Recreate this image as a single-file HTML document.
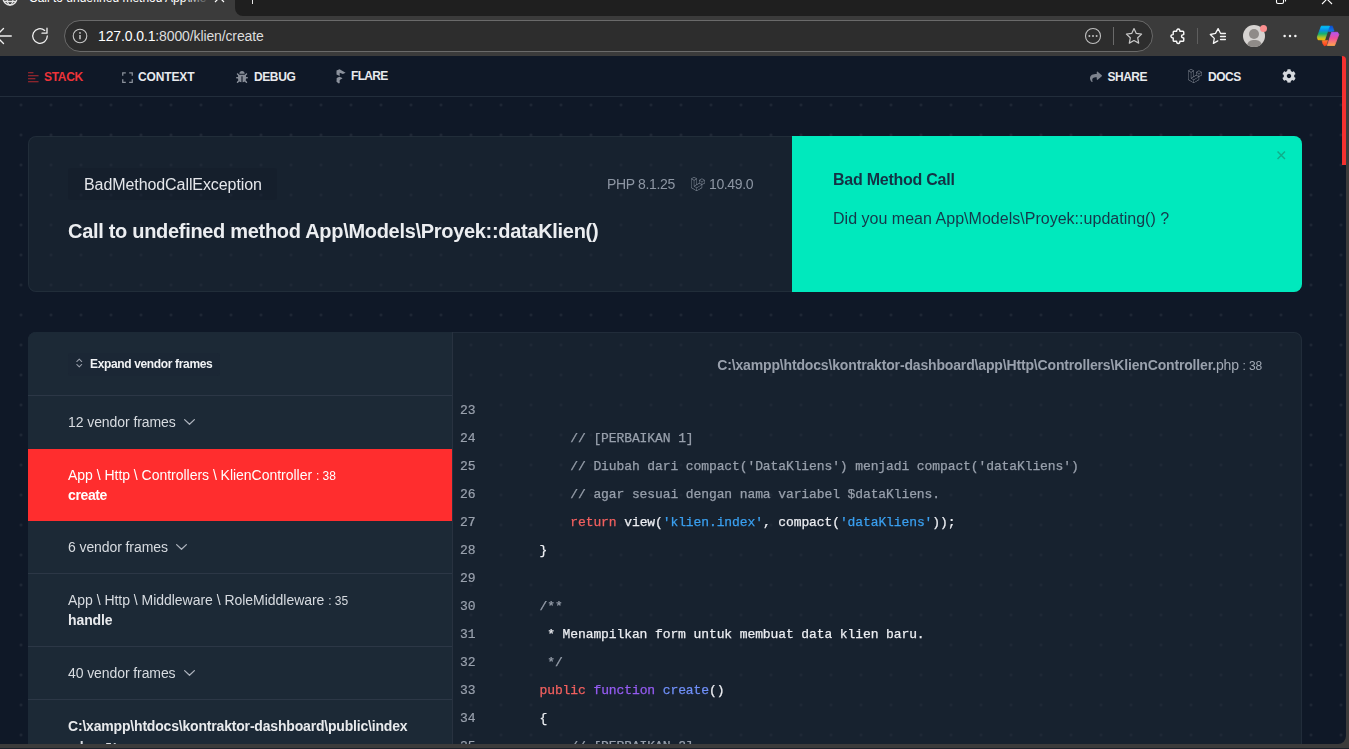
<!DOCTYPE html>
<html>
<head>
<meta charset="utf-8">
<title>Call to undefined method App\Models\Proyek::dataKlien()</title>
<style>
*{box-sizing:border-box;margin:0;padding:0}
html,body{width:1349px;height:749px;overflow:hidden;background:#3b3b3b;font-family:"Liberation Sans",sans-serif;}
.abs{position:absolute}
#tabstrip{position:absolute;left:0;top:0;width:1349px;height:16px;background:#3b3b3b;overflow:hidden}
#tabdark{position:absolute;left:235px;top:-10px;width:1120px;height:26px;background:#1f1f1f;border-bottom-left-radius:8px}
#toolbar{position:absolute;left:0;top:16px;width:1349px;height:40px;background:#3b3b3b}
#addr{position:absolute;left:64px;top:4px;width:1089px;height:32px;border-radius:16px;background:#2d2d2d;border:1px solid #6a6a6a}
#url{position:absolute;left:98px;top:11px;font-size:14px;line-height:18px;color:#fff;white-space:nowrap;letter-spacing:-0.12px}
#url span{color:#dedede}
#page{position:absolute;left:0;top:56px;width:1346px;height:688px;background-color:#0f1827;overflow:hidden;border-top-right-radius:8px;border-bottom-right-radius:8px;
 background-image:radial-gradient(circle at 1.5px 1.5px, rgba(255,255,255,0.085) 0, rgba(255,255,255,0.085) 0.9px, rgba(255,255,255,0) 1.6px);background-size:30px 30px;background-position:19.5px 17.5px}
#nav{position:absolute;left:0;top:0;width:1346px;height:41px;background:#0f1827;border-bottom:1px solid #222d3b}
.navitem{position:absolute;top:13.500px;font-size:12px;line-height:14px;font-weight:bold;color:#e8eaee;text-transform:uppercase;white-space:nowrap}
svg{position:absolute;overflow:visible}
.t{position:absolute;white-space:nowrap}

.sep{left:0;width:424px;height:1px;background:#2c3746}
.vf{font-size:14px;line-height:18px;color:#d7dbe0}
.fr{font-size:14px;line-height:18px;color:#d7dbe0}
.fm{font-size:14px;line-height:18px;font-weight:bold;color:#e8eaed}
.ln{font-size:12px}
.chev{fill:none;stroke:#aab0ba;stroke-width:1.300;stroke-linecap:round;stroke-linejoin:round}

.lnum{font-family:"Liberation Mono",monospace;font-size:13px;line-height:28px;letter-spacing:-0.100px;color:#9aa2ae;-webkit-text-stroke:0.200px}
.cl{font-family:"Liberation Mono",monospace;font-size:13px;line-height:28px;letter-spacing:-0.100px;color:#eceef2;white-space:pre;-webkit-text-stroke:0.250px}
.cm{color:#98a0ac}
.kw{color:#f1605f}
.st{color:#3aa0f0}
.fn{color:#955cf2}
.ti{color:#6f8ff7}
</style>
</head>
<body>
<div id="tabstrip">
  <!-- tab title (cut off) -->
  <svg style="left:2px;top:-10px" width="16" height="16" viewBox="0 0 16 16" fill="none" stroke="#e6e6e6" stroke-width="1.3"><circle cx="8" cy="8" r="7"/><ellipse cx="8" cy="8" rx="3" ry="7"/><path d="M1 8h14M2 11.5h12"/></svg>
  <div class="t" style="left:29px;top:-9.500px;font-size:12px;line-height:14px;color:#fff;width:178px;overflow:hidden">Call to undefined method App\Models\Proyek</div>
  <div class="abs" style="left:187px;top:0;width:22px;height:6px;background:linear-gradient(90deg,rgba(59,59,59,0),#3b3b3b)"></div>
  <svg style="left:215px;top:-6.700px" width="9" height="9" viewBox="0 0 9 9" stroke="#fff" stroke-width="1.2"><path d="M0 0L9 9M9 0L0 9"/></svg>
  <div id="tabdark"></div>
  <div class="abs" style="left:252px;top:-6px;width:1px;height:10px;background:#e8e8e8"></div>
  <svg style="left:1276px;top:-6px" width="10" height="10" viewBox="0 0 10 10" fill="none" stroke="#fff" stroke-width="1.1"><rect x="0.5" y="2.5" width="7" height="7" rx="1.5"/><path d="M2.5 0.5h5a2 2 0 0 1 2 2v5"/></svg>
  <svg style="left:1322px;top:-6px" width="10" height="10" viewBox="0 0 10 10" stroke="#fff" stroke-width="1.1"><path d="M0 0L10 10M10 0L0 10"/></svg>

</div>
<div id="toolbar">
  <div id="addr"></div>
  <!-- back arrow (partially cut) -->
  <svg style="left:-4.800px;top:11.500px" width="18" height="16" viewBox="0 0 18 16" fill="none" stroke="#f0f0f0" stroke-width="1.300" stroke-linecap="round" stroke-linejoin="round"><path d="M16.300 8H1M8.500 0.500L1 8l7.500 7.500"/></svg>
  <!-- reload -->
  <svg style="left:31px;top:11px" width="18" height="18" viewBox="0 0 18 18" fill="none" stroke="#f0f0f0" stroke-width="1.3" stroke-linecap="round" stroke-linejoin="round"><path d="M16.3 9a7.3 7.3 0 1 1-2.6-5.6"/><path d="M16 1.2v5h-5"/></svg>
  <!-- info -->
  <svg style="left:72px;top:12px" width="16" height="16" viewBox="0 0 16 16" fill="none" stroke="#c8c8c8" stroke-width="1.1"><circle cx="8" cy="8" r="6.8"/><path d="M8 7v4.2" stroke-width="1.5"/><circle cx="8" cy="4.9" r="0.9" fill="#c8c8c8" stroke="none"/></svg>

  <svg style="left:1084px;top:11px" width="18" height="18" viewBox="0 0 18 18" fill="none" stroke="#c0c0c0" stroke-width="1.1"><circle cx="9" cy="9" r="7.500"/><g fill="#c0c0c0" stroke="none"><circle cx="5.4" cy="9" r="1"/><circle cx="9" cy="9" r="1"/><circle cx="12.6" cy="9" r="1"/></g></svg>
  <div class="abs" style="left:1113px;top:11px;width:1px;height:18px;background:#6a6a6a"></div>
  <svg style="left:1125px;top:11px" width="18" height="18" viewBox="0 0 18 18" fill="none" stroke="#c8c8c8" stroke-width="1.2" stroke-linejoin="round"><path d="M9 1.5l2.3 4.9 5.3.7-3.9 3.7 1 5.3L9 13.5l-4.7 2.6 1-5.3L1.4 7.1l5.3-.7z"/></svg>
  <!-- puzzle -->
  <svg style="left:1169.700px;top:11.800px" width="15.600" height="16.500" viewBox="0 0 17 18" fill="none" stroke="#f8f8f8" stroke-width="1.550" stroke-linejoin="round"><path d="M4.500 3.500H7.200C7.200 2.500 7.600 1 9 1S10.800 2.500 10.800 3.500H14Q15 3.500 15 4.500V7.200C14 7.200 12.600 7.600 12.600 9S14 10.800 15 10.800V13.500Q15 14.500 14 14.500H10.800C10.800 15.500 10.400 17 9 17S7.200 15.500 7.200 14.500H4.500Q3.500 14.500 3.500 13.500V10.800C2.500 10.800 1 10.400 1 9S2.500 7.200 3.500 7.200V4.500Q3.500 3.500 4.500 3.500Z"/></svg>
  <div class="abs" style="left:1197px;top:12px;width:1px;height:16px;background:#5e5e5e"></div>
  <!-- favorites -->
  <svg style="left:1209px;top:11px" width="18" height="18" viewBox="0 0 18 18" fill="none" stroke="#f5f5f5" stroke-width="1.300" stroke-linejoin="round" stroke-linecap="round"><path d="M8.800 13.900L4.400 16.400 5.300 11.400 1.300 7.500 6.500 6.400 9.100 1.600 11.600 6.500H16.400M11.500 9.500H16.400M11.500 12.500H16.400"/></svg>
  <!-- avatar -->
  <div class="abs" style="left:1243px;top:9px;width:22px;height:22px;border-radius:11px;background:#d6d3d1;overflow:hidden">
    <div class="abs" style="left:6px;top:4px;width:10px;height:10px;border-radius:5px;background:#8f8b88"></div>
    <div class="abs" style="left:3.500px;top:14.500px;width:15px;height:12px;border-radius:7.500px;background:#8f8b88"></div>
  </div>
  <div class="abs" style="left:1260px;top:8.500px;width:7px;height:7px;border-radius:3.500px;background:#fb8f8f"></div>
  <!-- more -->
  <svg style="left:1283px;top:18px" width="14" height="4" viewBox="0 0 14 4" fill="#f4f4f4"><circle cx="1.600" cy="2" r="1.250"/><circle cx="7" cy="2" r="1.250"/><circle cx="12.400" cy="2" r="1.250"/></svg>
  <!-- copilot -->
  <svg style="left:1316px;top:9px" width="24" height="22" viewBox="0 0 24 22">
    <defs>
      <linearGradient id="cg1" x1="0" y1="0" x2="0" y2="1"><stop offset="0" stop-color="#00c4ff"/><stop offset="0.300" stop-color="#0a90e6"/><stop offset="0.550" stop-color="#12b070"/><stop offset="0.800" stop-color="#a8c030"/><stop offset="1" stop-color="#ffc000"/></linearGradient>
      <linearGradient id="cg2" x1="0" y1="0" x2="0" y2="1"><stop offset="0" stop-color="#b454f2"/><stop offset="0.450" stop-color="#f0509c"/><stop offset="1" stop-color="#ffa24e"/></linearGradient>
      <linearGradient id="cg3" x1="0" y1="0" x2="0" y2="1"><stop offset="0" stop-color="#0a4ed2"/><stop offset="1" stop-color="#1478e6"/></linearGradient>
      <linearGradient id="cg4" x1="0" y1="0" x2="0" y2="1"><stop offset="0" stop-color="#ff7a30"/><stop offset="1" stop-color="#ff3a1c"/></linearGradient>
    </defs>
    <path d="M13.600 0.900h2.800l1.700 5.100-3.400 0.700-2.700-0.400z" fill="url(#cg3)" stroke="url(#cg3)" stroke-width="0.500" stroke-linejoin="round"/>
    <path d="M6.100 15.700l5.600-0.400-1.100 4.900-2.300 0.700-1.500-2.200z" fill="url(#cg4)" stroke="url(#cg4)" stroke-width="0.500" stroke-linejoin="round"/>
    <path d="M5.300 1.200h8.100L8.700 15 2 14.700 1.300 12z" fill="url(#cg1)" stroke="url(#cg1)" stroke-width="0.800" stroke-linejoin="round"/>
    <path d="M15.600 7.300h6l1.200 2.200-4.200 11H11.400z" fill="url(#cg2)" stroke="url(#cg2)" stroke-width="0.800" stroke-linejoin="round"/>
  </svg>

  <div id="url">127.0.0.1<span>:8000/klien/create</span></div>
</div>
<div id="page">
  <div id="nav">
    <!-- STACK -->
    <svg style="left:28px;top:16px" width="11" height="11" viewBox="0 0 11 11" fill="#b52a30"><rect x="0" y="0.200" width="5.500" height="1.150" rx="0.300"/><rect x="0" y="3.200" width="10.600" height="1.150" rx="0.300"/><rect x="0" y="6.200" width="7.400" height="1.150" rx="0.300"/><rect x="0" y="9.200" width="10.600" height="1.150" rx="0.300"/></svg>
    <div class="navitem" id="n1" style="letter-spacing:-0.3px;left:44px;color:#ee3339">Stack</div>
    <!-- CONTEXT -->
    <svg style="left:122px;top:16px" width="11" height="11" viewBox="0 0 11 11" fill="none" stroke="#8b919c" stroke-width="1.250"><path d="M0.750 3.800V0.750H3.800M7.200 0.750h3.050V3.800M10.250 7.200v3.050H7.200M3.800 10.250H0.750V7.200"/></svg>
    <div class="navitem" id="n2" style="letter-spacing:-0.14px;left:138px">Context</div>
    <!-- DEBUG -->
    <svg style="left:236px;top:15px" width="12" height="12" viewBox="0 0 512 512" fill="#868c97"><path d="M511.988 288.900c-.478 17.430-15.217 31.100-32.653 31.100H424v16c0 21.864-4.882 42.584-13.600 61.145l60.228 60.228c12.496 12.497 12.496 32.758 0 45.255-12.498 12.497-32.759 12.496-45.256 0l-54.736-54.736C345.886 467.965 314.351 480 280 480V236c0-6.627-5.373-12-12-12h-24c-6.627 0-12 5.373-12 12v244c-34.351 0-65.886-12.035-90.636-32.108l-54.736 54.736c-12.498 12.497-32.759 12.496-45.256 0-12.496-12.497-12.496-32.758 0-45.255l60.228-60.228C92.882 378.584 88 357.864 88 336v-16H32.666C15.230 320 .491 306.330.013 288.900-.484 270.816 14.028 256 32 256h56v-58.745l-46.628-46.628c-12.496-12.497-12.496-32.758 0-45.255 12.498-12.497 32.758-12.497 45.256 0L141.255 160h229.489l54.627-54.627c12.498-12.497 32.758-12.497 45.256 0 12.496 12.497 12.496 32.758 0 45.255L424 197.255V256h56c17.972 0 32.484 14.816 31.988 32.900zM257 0c-61.856 0-112 50.144-112 112h224C369 50.144 318.856 0 257 0z"/></svg>
    <div class="navitem" id="n3" style="letter-spacing:-0.4px;left:254px">Debug</div>
    <!-- FLARE -->
    <svg style="left:335.500px;top:12.800px" width="10" height="15" viewBox="0 0 10 15" fill="#8b919c"><path d="M0.500 1.600L3.600 0.170 9.600 3.700 6.900 5.100 3.700 3.850V7.100L0.500 5.450z"/><path d="M0.700 9L3.400 7.860 6.300 9V9.600L3.700 10.900V14.100L2.800 14.400 0.500 12.800z"/></svg>
    <div class="navitem" id="n4" style="letter-spacing:-0.68px;left:351px;top:12.500px">Flare</div>
    <!-- SHARE -->
    <svg style="left:1090px;top:16px" width="12" height="10.500" viewBox="0 0 512 448" fill="#7d838e"><path d="M503.691 157.836l-176.004-152c-15.387-13.289-39.687-2.495-39.687 18.164v80.054C127.371 105.894 0 138.087 0 290.313c0 61.441 39.581 122.309 83.333 154.132 13.653 9.931 33.111-2.533 28.077-18.631C66.066 280.804 132.917 242.309 288 240.078V328c0 20.692 24.327 31.434 39.687 18.164l176.004-152c11.071-9.562 11.086-26.753 0-36.328z" transform="translate(0,-16)"/></svg>
    <div class="navitem" id="n5" style="letter-spacing:-0.5px;left:1107.500px">Share</div>
    <!-- DOCS -->
    <svg style="left:1188px;top:13px" width="14" height="14" viewBox="0 0 512 512" fill="#8a909b"><path d="M504.400,115.830a5.720,5.720,0,0,0-.28-.68,8.520,8.520,0,0,0-.53-1.250,6,6,0,0,0-.54-.71,9.360,9.360,0,0,0-.72-.94c-.23-.22-.52-.4-.77-.6a8.840,8.840,0,0,0-.9-.68L404.400,55.550a8,8,0,0,0-8,0L300.120,111h0a8.070,8.070,0,0,0-.88.690,7.680,7.680,0,0,0-.78.600,8.230,8.230,0,0,0-.72.930c-.17.240-.39.450-.54.710a9.700,9.700,0,0,0-.52,1.250c-.8.230-.21.440-.28.680a8.080,8.080,0,0,0-.28,2.080V223.180l-80.220,46.190V63.440a7.800,7.800,0,0,0-.28-2.090c-.06-.24-.2-.45-.28-.68a8.350,8.350,0,0,0-.52-1.240c-.14-.26-.37-.47-.54-.72a9.360,9.360,0,0,0-.72-.94,9.460,9.460,0,0,0-.78-.6,9.800,9.800,0,0,0-.88-.68h0L115.610,1.070a8,8,0,0,0-8,0L11.340,56.490h0a6.520,6.520,0,0,0-.88.690,7.810,7.810,0,0,0-.79.600,8.150,8.150,0,0,0-.71.930c-.18.250-.4.460-.55.720a7.880,7.880,0,0,0-.51,1.240,6.460,6.460,0,0,0-.29.670,8.180,8.180,0,0,0-.28,2.100v329.700a8,8,0,0,0,4,6.950l192.500,110.840a8.830,8.830,0,0,0,1.330.54c.21.080.41.200.63.260a7.920,7.920,0,0,0,4.100,0c.2-.05.370-.16.550-.22a8.600,8.600,0,0,0,1.400-.58L404.400,400.090a8,8,0,0,0,4-6.950V287.880l92.240-53.110a8,8,0,0,0,4-7V117.920A8.630,8.630,0,0,0,504.400,115.830ZM111.600,17.280h0l80.190,46.150-80.200,46.180L31.410,63.440Zm88.250,60V278.600l-46.530,26.790-33.690,19.400V123.500l46.530-26.790Zm0,412.780L23.370,388.500V77.320L57.060,96.700l46.520,26.800V338.680a6.940,6.940,0,0,0,.12.900,8,8,0,0,0,.16,1.180h0a5.920,5.920,0,0,0,.38.900,6.380,6.380,0,0,0,.42,1v0a8.540,8.540,0,0,0,.6.780,7.620,7.620,0,0,0,.66.840l0,0c.23.220.52.380.77.580a8.930,8.930,0,0,0,.86.660l0,0,0,0,92.190,52.180Zm8-106.170-80.060-45.320,84.090-48.410,92.260-53.110,80.100,46.110-58.770,33.560Zm184.520,4.570L215.880,490.110V397.800L346.600,323.200l45.770-26.150Zm0-119.130L358.680,250l-46.530-26.790V131.790l33.690,19.400L392.370,178Zm8-105.280-80.200-46.170,80.200-46.160,80.180,46.150Zm8,105.280V178L455,151.190l33.680-19.400v91.390h0Z"/></svg>
    <div class="navitem" id="n6" style="letter-spacing:-0.5px;left:1208px">Docs</div>
    <!-- gear -->
    <svg style="left:1282px;top:13px" width="14" height="14" viewBox="0 0 512 512" fill="#d5d8dd"><path d="M487.400 315.700l-42.600-24.600c4.300-23.200 4.300-47 0-70.200l42.600-24.600c4.900-2.800 7.100-8.600 5.500-14-11.100-35.600-30-67.800-54.700-94.600-3.800-4.100-10-5.100-14.800-2.300L380.800 110c-17.900-15.400-38.500-27.300-60.800-35.100V25.800c0-5.600-3.900-10.500-9.400-11.700-36.700-8.200-74.300-7.800-109.200 0-5.500 1.200-9.400 6.100-9.400 11.700V75c-22.200 7.900-42.800 19.800-60.800 35.100L88.700 85.500c-4.900-2.800-11-1.900-14.800 2.300-24.700 26.700-43.600 58.900-54.700 94.600-1.700 5.400.6 11.200 5.500 14L67.300 221c-4.300 23.200-4.300 47 0 70.200l-42.600 24.600c-4.900 2.800-7.100 8.600-5.500 14 11.100 35.600 30 67.800 54.700 94.600 3.800 4.100 10 5.100 14.800 2.300l42.600-24.600c17.900 15.400 38.500 27.300 60.800 35.100v49.200c0 5.600 3.900 10.500 9.400 11.700 36.700 8.200 74.300 7.800 109.200 0 5.500-1.200 9.400-6.100 9.400-11.700v-49.200c22.200-7.900 42.800-19.800 60.800-35.100l42.600 24.600c4.900 2.800 11 1.900 14.800-2.300 24.700-26.700 43.600-58.900 54.700-94.600 1.500-5.500-.7-11.300-5.600-14.100zM256 336c-44.100 0-80-35.900-80-80s35.900-80 80-80 80 35.900 80 80-35.900 80-80 80z"/></svg>
  </div>

  <!-- error card -->
  <div class="abs" id="card" style="left:28px;top:80px;width:1274px;height:156px;border-radius:8px;background:rgba(31,43,55,0.5);box-shadow:inset 0 0 0 1px rgba(55,68,81,0.32)"></div>
  <div class="abs" style="left:68px;top:112px;width:209px;height:32px;border-radius:3px;background:rgba(17,24,39,0.28)"></div>
  <div class="t" id="c1" style="will-change:transform;letter-spacing:-0.08px;left:84px;top:119px;font-size:16px;line-height:20px;color:#e5e7eb">BadMethodCallException</div>
  <div class="t" id="c2" style="will-change:transform;letter-spacing:-0.34px;left:606.500px;top:119px;font-size:14px;line-height:18px;color:#8d96a3">PHP 8.1.25</div>
  <svg style="left:691px;top:121px" width="14" height="14" viewBox="0 0 512 512" fill="#8d96a3"><path d="M504.400,115.830a5.720,5.720,0,0,0-.28-.68,8.520,8.520,0,0,0-.53-1.250,6,6,0,0,0-.54-.71,9.360,9.360,0,0,0-.72-.94c-.23-.22-.52-.4-.77-.6a8.840,8.840,0,0,0-.9-.68L404.400,55.550a8,8,0,0,0-8,0L300.120,111h0a8.070,8.070,0,0,0-.88.690,7.680,7.680,0,0,0-.78.600,8.230,8.230,0,0,0-.72.930c-.17.240-.39.450-.54.710a9.700,9.700,0,0,0-.52,1.250c-.8.230-.21.440-.28.680a8.080,8.080,0,0,0-.28,2.080V223.180l-80.220,46.190V63.440a7.800,7.800,0,0,0-.28-2.090c-.06-.24-.2-.45-.28-.68a8.350,8.350,0,0,0-.52-1.240c-.14-.26-.37-.47-.54-.72a9.360,9.360,0,0,0-.72-.94,9.460,9.460,0,0,0-.78-.6,9.800,9.800,0,0,0-.88-.68h0L115.610,1.070a8,8,0,0,0-8,0L11.340,56.490h0a6.520,6.520,0,0,0-.88.690,7.810,7.810,0,0,0-.79.600,8.150,8.150,0,0,0-.71.930c-.18.250-.4.460-.55.720a7.880,7.880,0,0,0-.51,1.240,6.460,6.460,0,0,0-.29.670,8.180,8.180,0,0,0-.28,2.100v329.700a8,8,0,0,0,4,6.950l192.500,110.840a8.830,8.830,0,0,0,1.330.54c.21.080.41.200.63.260a7.920,7.920,0,0,0,4.100,0c.2-.05.370-.16.550-.22a8.600,8.600,0,0,0,1.400-.58L404.400,400.090a8,8,0,0,0,4-6.950V287.880l92.240-53.110a8,8,0,0,0,4-7V117.920A8.630,8.630,0,0,0,504.400,115.830ZM111.600,17.280h0l80.190,46.150-80.200,46.180L31.410,63.440Zm88.250,60V278.600l-46.530,26.790-33.690,19.400V123.500l46.530-26.790Zm0,412.780L23.370,388.500V77.320L57.060,96.700l46.520,26.800V338.680a6.940,6.940,0,0,0,.12.900,8,8,0,0,0,.16,1.180h0a5.920,5.920,0,0,0,.38.900,6.380,6.380,0,0,0,.42,1v0a8.540,8.540,0,0,0,.6.780,7.620,7.620,0,0,0,.66.840l0,0c.23.220.52.380.77.580a8.930,8.930,0,0,0,.86.660l0,0,0,0,92.190,52.180Zm8-106.170-80.060-45.320,84.090-48.410,92.260-53.110,80.100,46.110-58.770,33.560Zm184.520,4.570L215.880,490.110V397.800L346.600,323.200l45.770-26.150Zm0-119.130L358.680,250l-46.530-26.790V131.790l33.690,19.400L392.370,178Zm8-105.280-80.200-46.170,80.200-46.160,80.180,46.150Zm8,105.280V178L455,151.190l33.680-19.400v91.390h0Z"/></svg>
  <div class="t" id="c3" style="will-change:transform;letter-spacing:-0.37px;left:709px;top:119px;font-size:14px;line-height:18px;color:#8d96a3">10.49.0</div>
  <div class="t" id="c4" style="will-change:transform;letter-spacing:-0.305px;left:68px;top:163px;font-size:20px;line-height:24px;font-weight:bold;color:#eceef1">Call to undefined method App\Models\Proyek::dataKlien()</div>
  <!-- solution -->
  <div class="abs" id="sol" style="left:792px;top:80px;width:510px;height:156px;border-radius:0 8px 8px 0;background:#00e9bd"></div>
  <div class="t" id="s1" style="will-change:transform;letter-spacing:-0.25px;left:833px;top:114px;font-size:16px;line-height:20px;font-weight:bold;color:#143245">Bad Method Call</div>
  <div class="t" id="s2" style="will-change:transform;letter-spacing:0.02px;left:833px;top:153px;font-size:16px;line-height:20px;color:#15394b">Did you mean App\Models\Proyek::updating() ?</div>
  <svg style="left:1276.800px;top:94.800px" width="8.500" height="8.500" viewBox="0 0 8 8" stroke="#10ad8a" stroke-width="1.350" fill="none"><path d="M0.500 0.500l7 7M7.500 0.500l-7 7"/></svg>

  <!-- stack section -->
  <div class="abs" id="stack" style="will-change:transform;left:28px;top:276px;width:1274px;height:500px;border-radius:8px;overflow:hidden;background:rgba(31,43,55,0.5);box-shadow:inset 0 0 0 1px rgba(55,68,81,0.32)">
    <div class="abs" id="frames" style="left:0;top:0;width:424px;height:500px;background:#1c2936">
      <div class="abs" style="left:40px;top:21px;width:152px;height:23px;border-radius:3px;background:rgba(17,24,39,0.09)"></div>
      <svg style="left:47.700px;top:25.800px" width="6.500" height="10" viewBox="0 0 7 10" fill="none" stroke="#9aa1ac" stroke-width="1.100" stroke-linecap="round" stroke-linejoin="round"><path d="M0.800 3.400L3.500 0.800 6.200 3.400M0.800 6.600L3.500 9.200 6.200 6.600"/></svg>
      <div class="t" id="f0" style="letter-spacing:-0.35px;left:62px;top:25px;font-size:12px;line-height:14px;font-weight:bold;color:#f1f3f5">Expand vendor frames</div>
      <div class="abs sep" style="top:63px"></div>
      <div class="t vf" id="f1" style="letter-spacing:-0.075px;left:40px;top:81px">12 vendor frames</div>
      <svg class="chev" style="left:156px;top:87px" width="11" height="6" viewBox="0 0 11 6"><path d="M0.600 0.600L5.500 5.300 10.400 0.600"/></svg>
      <div class="abs" style="left:0;top:117px;width:424px;height:72px;background:#ff2d2e"></div>
      <div class="t fr" id="f2" style="letter-spacing:-0.025px;left:40px;top:134px;color:#fff">App \ Http \ Controllers \ KlienController <span class="ln">: 38</span></div>
      <div class="t fm" id="f3" style="letter-spacing:-0.38px;left:40px;top:154px;color:#fff">create</div>
      <div class="t vf" id="f4" style="letter-spacing:-0.09px;left:40px;top:206px">6 vendor frames</div>
      <svg class="chev" style="left:148px;top:212px" width="11" height="6" viewBox="0 0 11 6"><path d="M0.600 0.600L5.500 5.300 10.400 0.600"/></svg>
      <div class="abs sep" style="top:241px"></div>
      <div class="t fr" id="f5" style="letter-spacing:-0.03px;left:40px;top:259px">App \ Http \ Middleware \ RoleMiddleware <span class="ln">: 35</span></div>
      <div class="t fm" id="f6" style="letter-spacing:-0.1px;left:40px;top:279px">handle</div>
      <div class="abs sep" style="top:314px"></div>
      <div class="t vf" id="f7" style="letter-spacing:-0.09px;left:40px;top:332px">40 vendor frames</div>
      <svg class="chev" style="left:156px;top:338px" width="11" height="6" viewBox="0 0 11 6"><path d="M0.600 0.600L5.500 5.300 10.400 0.600"/></svg>
      <div class="abs sep" style="top:367px"></div>
      <div class="t fm" id="f8" style="letter-spacing:-0.185px;left:40px;top:385px">C:\xampp\htdocs\kontraktor-dashboard\public\index</div>
      <div class="t fr" id="f9" style="letter-spacing:-0.400px;left:40px;top:406px"><b>.php</b> <span class="ln">: 51</span></div>
    </div>
    <div class="abs" style="left:424px;top:0;width:1px;height:500px;background:#283240"></div>
    <div class="abs" id="code" style="left:425px;top:0;width:849px;height:500px">
      <div class="t" id="h1" style="letter-spacing:-0.156px;right:40px;top:24px;font-size:14px;line-height:18px;color:#a3abb6"><b style="color:#99a1ad">C:\xampp\htdocs\kontraktor-dashboard\app\Http\Controllers\KlienController.</b>php <span class="ln">: 38</span></div>
      <div class="t lnum" style="left:7px;top:65px">23</div>
      <div class="t lnum" style="left:7px;top:93px">24</div>
      <div class="t cl" style="left:24.900px;top:93px">            <span class="cm">// [PERBAIKAN 1]</span></div>
      <div class="t lnum" style="left:7px;top:121px">25</div>
      <div class="t cl" style="left:24.900px;top:121px">            <span class="cm">// Diubah dari compact('DataKliens') menjadi compact('dataKliens')</span></div>
      <div class="t lnum" style="left:7px;top:149px">26</div>
      <div class="t cl" style="left:24.900px;top:149px">            <span class="cm">// agar sesuai dengan nama variabel $dataKliens.</span></div>
      <div class="t lnum" style="left:7px;top:177px">27</div>
      <div class="t cl" style="left:24.900px;top:177px">            <span class="kw">return</span> view(<span class="st">'klien.index'</span>, compact(<span class="st">'dataKliens'</span>));</div>
      <div class="t lnum" style="left:7px;top:205px">28</div>
      <div class="t cl" style="left:24.900px;top:205px">        }</div>
      <div class="t lnum" style="left:7px;top:233px">29</div>
      <div class="t lnum" style="left:7px;top:261px">30</div>
      <div class="t cl" style="left:24.900px;top:261px">        <span class="cm">/**</span></div>
      <div class="t lnum" style="left:7px;top:289px">31</div>
      <div class="t cl" style="left:24.900px;top:289px">         * Menampilkan form untuk membuat data klien baru.</div>
      <div class="t lnum" style="left:7px;top:317px">32</div>
      <div class="t cl" style="left:24.900px;top:317px">        <span class="cm"> */</span></div>
      <div class="t lnum" style="left:7px;top:345px">33</div>
      <div class="t cl" style="left:24.900px;top:345px">        <span class="kw">public</span> <span class="fn">function</span> <span class="ti">create</span>()</div>
      <div class="t lnum" style="left:7px;top:373px">34</div>
      <div class="t cl" style="left:24.900px;top:373px">        {</div>
      <div class="t lnum" style="left:7px;top:401px">35</div>
      <div class="t cl" style="left:24.900px;top:401px">            <span class="cm">// [PERBAIKAN 2]</span></div>
    </div>
  </div>
</div>
<div class="abs" style="left:0;top:748px;width:1349px;height:1px;background:#1c222b"></div>
<div class="abs" style="left:1342px;top:56px;width:4px;height:109px;background:#f5302f;border-top-right-radius:6px"></div>
</body>
</html>
